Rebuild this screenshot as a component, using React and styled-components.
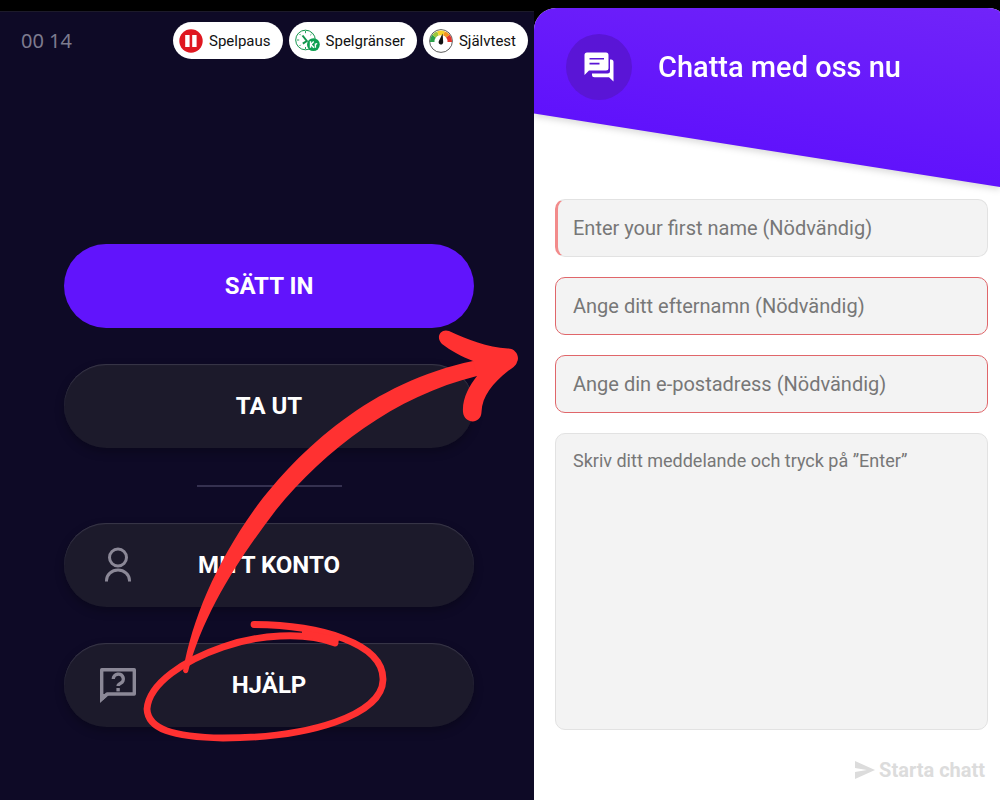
import React, { useState } from "react";
import styled, { createGlobalStyle } from "styled-components";

const GlobalStyle = createGlobalStyle`
  * {
    box-sizing: border-box;
  }

  body {
    margin: 0;
    background: #000;
    font-family: Roboto, "Liberation Sans", sans-serif;
  }
`;

// Two phone views placed side by side
const Page = styled.main`
  display: grid;
  grid-template-columns: 534fr 466fr;
  min-height: 100vh;
`;

const MenuPanel = styled.section`
  position: relative;
  display: flex;
  flex-direction: column;
  margin-top: 11px;
  background: #0e0a26;
  border-top: 1px solid #1c1a2a;
`;

const TopBar = styled.div`
  display: flex;
  align-items: center;
  justify-content: space-between;
  padding: 10px 6px 0 21px;
`;

const Clock = styled.time`
  color: #7d7b8e;
  font-family: "Noto Sans", sans-serif;
  font-size: 20px;
`;

const Pills = styled.nav`
  display: flex;
  gap: 6px;
`;

const Pill = styled.a`
  display: flex;
  align-items: center;
  gap: 6px;
  height: 37px;
  padding: 0 12px 0 6px;
  border-radius: 19px;
  background: #fff;
  color: #111;
  font-size: 15px;
  text-decoration: none;
`;

const Menu = styled.div`
  display: flex;
  flex-direction: column;
  gap: 36px;
  padding: 185px 60px 72px 64px;
`;

// Big rounded menu button, icon column on the left and an equal empty one on the right
const MenuButton = styled.button`
  display: grid;
  grid-template-columns: 108px 1fr 108px;
  align-items: center;
  justify-items: center;
  height: 84px;
  padding: 0;
  border: none;
  border-radius: 42px;
  background: ${(props) => (props.$primary ? "#6114fc" : "#1c1a2b")};
  box-shadow: ${(props) =>
    props.$primary
      ? "none"
      : "inset 0 1px 1px #3a384a, 0 4px 10px rgba(0, 0, 0, 0.25)"};
  color: #fff;
  font-family: inherit;
  font-size: 24px;
  font-weight: 700;
  cursor: pointer;
`;

const MenuLabel = styled.span`
  grid-column: 2;
  white-space: nowrap;
`;

const Divider = styled.hr`
  width: 145px;
  height: 3px;
  margin: 0 auto;
  border: solid #0e0a26;
  border-width: 1px 0 0;
  background: #353150;
`;

// Hand drawn marks that lie over the menu
const Marks = styled.svg`
  position: absolute;
  inset: 0;
  width: 100%;
  height: 100%;
  pointer-events: none;
`;

const ChatPanel = styled.section`
  display: flex;
  flex-direction: column;
  margin-top: 8px;
  border-radius: 22px 13px 0 0 / 22px 5px 0 0;
  background: #fff;
  overflow: hidden;
`;

const HeaderShadow = styled.div`
  filter: drop-shadow(0 3px 3px rgba(0, 0, 0, 0.14));
`;

const ChatHeader = styled.header`
  display: flex;
  gap: 26px;
  height: 179px;
  padding: 26px 32px;
  background: linear-gradient(190deg, #7124f9 0%, #5f11fc 75%);
  clip-path: polygon(0 0, 100% 0, 100% 100%, 0 59%);
`;

const ChatBadge = styled.div`
  display: flex;
  align-items: center;
  justify-content: center;
  width: 66px;
  height: 66px;
  border-radius: 50%;
  background: #5a15d6;
`;

const ChatTitle = styled.h1`
  margin: 0;
  color: #fff;
  font-size: 29px;
  font-weight: 500;
  line-height: 66px;
`;

const Form = styled.form`
  display: flex;
  flex: 1;
  flex-direction: column;
  gap: 20px;
  padding: 12px 12px 10px 21px;
`;

const Input = styled.input`
  height: 58px;
  padding: 0 17px;
  border: 1px solid ${(props) => (props.$invalid ? "#e0666a" : "#e2e2e2")};
  border-left: ${(props) => props.$required && "3px solid #f28b8b"};
  padding-left: ${(props) => props.$required && "15px"};
  border-radius: 10px;
  background: #f3f3f3;
  color: #333;
  font-family: inherit;
  font-size: 20px;
  outline: none;

  &::placeholder {
    color: #777;
  }
`;

const Message = styled.textarea`
  flex: 1;
  min-height: 200px;
  padding: 14px 17px;
  border: 1px solid #e2e2e2;
  border-radius: 10px;
  background: #f3f3f3;
  color: #333;
  font-family: inherit;
  font-size: 18px;
  line-height: 26px;
  resize: none;
  outline: none;

  &::placeholder {
    color: #777;
  }
`;

const SendButton = styled.button`
  display: flex;
  align-items: center;
  align-self: flex-end;
  gap: 4px;
  height: 40px;
  padding: 0 3px;
  border: none;
  background: none;
  color: #dcdcdc;
  font-family: inherit;
  font-size: 20px;
  font-weight: 700;
`;

const PauseIcon = () => (
  <svg width="24" height="24" viewBox="0 0 24 24" aria-hidden="true">
    <circle cx="12" cy="12" r="11.7" fill="#df1720" />
    <rect x="6.2" y="6" width="4.4" height="12" fill="#fff" />
    <rect x="13.2" y="6" width="4.4" height="12" fill="#fff" />
  </svg>
);

const LimitsIcon = () => (
  <svg width="25" height="24" viewBox="0 0 25 24" aria-hidden="true">
    <circle cx="10.5" cy="11" r="9.8" fill="#fff" stroke="#12964c" />
    <path
      d="M10.5 2v2.2M2 11h2.2M17 11h2M10.5 18v2M4.5 5l1.2 1.2M16.5 5l-1.2 1.2M4.5 17l1.2-1.2"
      stroke="#12964c"
      strokeWidth="0.9"
    />
    <path d="M7.5 6.5l4.3 5.5-4 2.6" fill="none" stroke="#12964c" strokeWidth="2" />
    <circle cx="18.4" cy="15.6" r="6.4" fill="#0fa052" />
    <path
      d="M15.5 12.3v6.4M18.7 12.6l-2.8 2.9 3 3.2M20.4 18.7v-4.2M20.4 16.2q.2-1.6 1.8-1.4"
      fill="none"
      stroke="#fff"
      strokeWidth="1.4"
    />
  </svg>
);

const GaugeIcon = () => (
  <svg width="24" height="24" viewBox="0 0 24 24" aria-hidden="true">
    <circle cx="12" cy="12" r="11.4" fill="#fff" stroke="#333" strokeWidth="0.8" />
    <g fill="none" strokeWidth="4.6">
      <path d="M3.2 13A9 9 0 0 1 5 7.2" stroke="#2ba24a" />
      <path d="M5 7.2A9 9 0 0 1 9 4.4" stroke="#9cc63c" />
      <path d="M9 4.4A9 9 0 0 1 15 4.4" stroke="#f6d32b" />
      <path d="M15 4.4A9 9 0 0 1 19 7.2" stroke="#f39421" />
      <path d="M19 7.2A9 9 0 0 1 20.8 13" stroke="#e5352b" />
    </g>
    <path d="M13.6 4.5l.6 8.5a2.3 2.3 0 1 1-4.3-.9z" fill="#111" />
  </svg>
);

const UserIcon = () => (
  <svg width="28" height="36" viewBox="0 0 28 36" aria-hidden="true">
    <g fill="none" stroke="#8b8897" strokeWidth="3">
      <circle cx="14" cy="10.5" r="8.5" />
      <path d="M2.5 34.5v-1a11.5 10.5 0 0 1 23 0v1" />
    </g>
  </svg>
);

const HelpIcon = () => (
  <svg width="36" height="36" viewBox="0 0 36 36" aria-hidden="true">
    <g fill="none" stroke="#8b8897" strokeWidth="3.4">
      <path d="M1.7 31.5V2.7h32.6V27H7l-5.3 5" strokeLinejoin="round" />
      <path d="M13.3 12a5 4.8 0 1 1 7.3 4.2q-2.5 1.3-2.5 2.8" />
      <path d="M18.1 21v3.4" />
    </g>
    <path d="M0 27h10l-10 9z" fill="#8b8897" />
  </svg>
);

const ChatIcon = () => (
  <svg width="30" height="30" viewBox="0 0 30 30" aria-hidden="true">
    <path
      d="M3 .5h19a2.5 2.5 0 0 1 2.5 2.5v13a2.5 2.5 0 0 1-2.5 2.5H5L.5 23V3A2.5 2.5 0 0 1 3 .5z"
      fill="#fff"
    />
    <path d="M5.5 6.8h14.5M5.5 11.6h10" stroke="#5a15d6" strokeWidth="1.6" />
    <path
      d="M26 7.5h1a2.5 2.5 0 0 1 2.5 2.5v19.5L25 25.3H10.5a2.5 2.5 0 0 1-2.5-2.5V21.5h15.5a2.5 2.5 0 0 0 2.5-2.5z"
      fill="#fff"
    />
  </svg>
);

const SendIcon = () => (
  <svg width="20" height="18" viewBox="0 0 20 18" aria-hidden="true">
    <path d="M0 0l20 9-20 9v-7l12-2L0 7z" fill="currentColor" />
  </svg>
);

const links = [
  { text: "Spelpaus", Icon: PauseIcon },
  { text: "Spelgränser", Icon: LimitsIcon },
  { text: "Självtest", Icon: GaugeIcon },
];

const fields = [
  { name: "firstName", type: "text", placeholder: "Enter your first name (Nödvändig)" },
  { name: "lastName", type: "text", placeholder: "Ange ditt efternamn (Nödvändig)", invalid: true },
  { name: "email", type: "email", placeholder: "Ange din e-postadress (Nödvändig)", invalid: true },
];

const App = () => {
  const [values, setValues] = useState({
    firstName: "",
    lastName: "",
    email: "",
    message: "",
  });

  const handleChange = (e) => {
    setValues({ ...values, [e.target.name]: e.target.value });
  };

  return (
    <>
      <GlobalStyle />
      <Page>
        <MenuPanel>
          <TopBar>
            <Clock>00 14</Clock>
            <Pills>
              {links.map(({ text, Icon }) => (
                <Pill href="#" key={text}>
                  <Icon />
                  {text}
                </Pill>
              ))}
            </Pills>
          </TopBar>
          <Menu>
            <MenuButton $primary type="button">
              <MenuLabel>SÄTT IN</MenuLabel>
            </MenuButton>
            <MenuButton type="button">
              <MenuLabel>TA UT</MenuLabel>
            </MenuButton>
            <Divider />
            <MenuButton type="button">
              <UserIcon />
              <MenuLabel>MITT KONTO</MenuLabel>
            </MenuButton>
            <MenuButton type="button">
              <HelpIcon />
              <MenuLabel>HJÄLP</MenuLabel>
            </MenuButton>
          </Menu>
          <Marks viewBox="0 12 534 788" preserveAspectRatio="none" aria-hidden="true">
            {/* Arrow shaft */}
            <path
              d="M183 671C192 620 215 565 254 510C300 448 372 382 473 361L480 366L477 376C395 396 325 450 276 510C240 557 203 613 188 672Q185 675 183 671z"
              fill="#ff3131"
            />
            {/* Arrow head */}
            <path
              d="M449 331C468 340 487 347 508 348.5C516 348.5 520 357 517 362C516 366 512 368 508 371C493 383 482 396 481.5 412C481 425 464 424 463 412C462 399 469 386 477 376L473 361C462 357 450 350 442 344C435 337 441 328 449 331z"
              fill="#ff3131"
            />
            {/* Ring round the help button */}
            <path
              d="M254 624.500C320 625 384 643 383 680C382 715 310 738 223 738C172 737 148 729 147 709C149 683 185 660 223 647C257 635 304 631 335 643"
              fill="none"
              stroke="#ff3131"
              strokeWidth="6.8"
              strokeLinecap="round"
            />
            {/* Where the two ends of the ring cross */}
            <path d="M302 630L340 637L337 646L302 636z" fill="#ff3131" />
          </Marks>
        </MenuPanel>

        <ChatPanel>
          <HeaderShadow>
            <ChatHeader>
              <ChatBadge>
                <ChatIcon />
              </ChatBadge>
              <ChatTitle>Chatta med oss nu</ChatTitle>
            </ChatHeader>
          </HeaderShadow>
          <Form onSubmit={(e) => e.preventDefault()}>
            {fields.map((field) => (
              <Input
                key={field.name}
                type={field.type}
                name={field.name}
                placeholder={field.placeholder}
                aria-label={field.placeholder}
                value={values[field.name]}
                onChange={handleChange}
                $invalid={field.invalid}
                $required={!field.invalid}
              />
            ))}
            <Message
              name="message"
              placeholder="Skriv ditt meddelande och tryck på ”Enter”"
              aria-label="Skriv ditt meddelande"
              value={values.message}
              onChange={handleChange}
            />
            <SendButton type="submit">
              <SendIcon />
              Starta chatt
            </SendButton>
          </Form>
        </ChatPanel>
      </Page>
    </>
  );
};

export default App;
